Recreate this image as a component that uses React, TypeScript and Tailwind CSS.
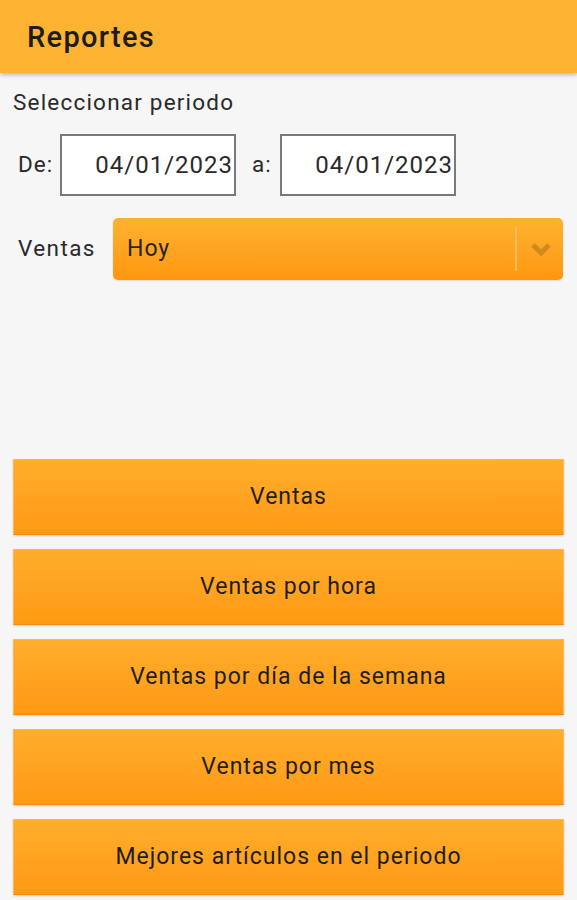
import React from 'react'

const BUTTONS = [
  'Ventas',
  'Ventas por hora',
  'Ventas por día de la semana',
  'Ventas por mes',
  'Mejores artículos en el periodo',
]

function DateBox({ value }: { value: string }) {
  return (
    <div className="h-[62px] w-[176px] bg-white border-2 border-[#7a7a7a] flex items-center justify-end pr-[1px] text-[24px] tracking-[1px] text-[#2a2a2a]">
      {value}
    </div>
  )
}

export default function App() {
  return (
    <div className="w-[577px] h-[900px] overflow-hidden bg-[#f6f6f6] font-['Roboto','Liberation_Sans',sans-serif]">
      {/* Barra superior */}
      <header className="h-[73px] bg-[#fbb331] flex items-center pl-[27px] pt-[3px] shadow-[0_2px_4px_rgba(0,0,0,0.25)] relative z-10">
        <h1 className="m-0 text-[29px] font-medium tracking-[1.3px] text-[#1c1c1c]">Reportes</h1>
      </header>

      <main className="px-[13px]">
        <p className="mt-[16px] text-[22.5px] tracking-[1.2px] leading-[27px] text-[#2a2a2a]">Seleccionar periodo</p>

        {/* Fechas */}
        <div className="mt-[18px] flex items-center pl-[5px]">
          <span className="text-[22.5px] tracking-[1px] text-[#2a2a2a] w-[42px]">De:</span>
          <DateBox value="04/01/2023" />
          <span className="text-[22.5px] tracking-[1px] text-[#2a2a2a] ml-[16px] w-[28px]">a:</span>
          <DateBox value="04/01/2023" />
        </div>

        {/* Selector */}
        <div className="mt-[22px] flex items-center pl-[5px]">
          <span className="text-[22.5px] tracking-[1.4px] text-[#2a2a2a] w-[95px]">Ventas</span>
          <div className="h-[62px] w-[450px] rounded-[5px] bg-gradient-to-b from-[#fdb22f] to-[#ff970d] flex items-center shadow-[0_1px_2px_rgba(0,0,0,0.12)]">
            <span className="flex-1 pl-[14px] text-[23px] tracking-[1px] text-[#262626]">Hoy</span>
            <div className="h-[44px] w-[2px] bg-[#ffbd5c]" />
            <div className="w-[46px] flex justify-center pl-[1px]">
              <svg width="22" height="15" viewBox="0 0 22 15">
                <path d="M3 3 L11 11 L19 3" fill="none" stroke="#d08a1e" strokeWidth="5" />
              </svg>
            </div>
          </div>
        </div>

        {/* Reportes */}
        <div className="mt-[179px] flex flex-col gap-[14px]">
          {BUTTONS.map((label) => (
            <button
              key={label}
              className="h-[76px] w-[551px] bg-gradient-to-b from-[#ffae2c] to-[#ff9912] border border-[#ffb65a] border-b-[#f08d10] shadow-[0_1px_2px_rgba(0,0,0,0.15)] text-[23px] tracking-[1px] text-[#1e1e1e]"
            >
              {label}
            </button>
          ))}
        </div>
      </main>
    </div>
  )
}
